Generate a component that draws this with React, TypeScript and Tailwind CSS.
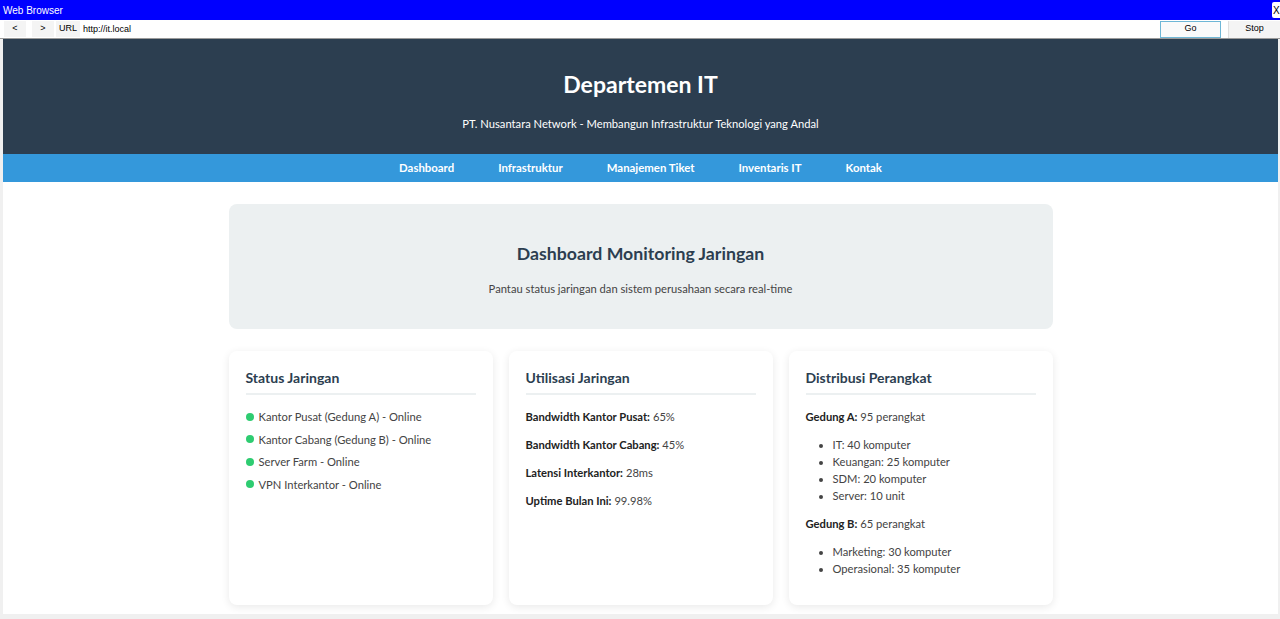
import { useState } from "react";

const navItems = ["Dashboard", "Infrastruktur", "Manajemen Tiket", "Inventaris IT", "Kontak"];

const statusItems = [
  "Kantor Pusat (Gedung A) - Online",
  "Kantor Cabang (Gedung B) - Online",
  "Server Farm - Online",
  "VPN Interkantor - Online",
];

const utilisasi = [
  { label: "Bandwidth Kantor Pusat:", value: "65%" },
  { label: "Bandwidth Kantor Cabang:", value: "45%" },
  { label: "Latensi Interkantor:", value: "28ms" },
  { label: "Uptime Bulan Ini:", value: "99.98%" },
];

const Card = ({ title, children }: { title: string; children: React.ReactNode }) => (
  <div className="bg-white rounded-lg shadow-[0_2px_8px_rgba(0,0,0,0.09)] px-[17px] pt-[17px] pb-4 h-[254px]">
    <h3 className="text-[14px] font-bold text-[#2c3e50] leading-[20px] pb-[5px] border-b-2 border-[#ecf0f1] mb-[13px]">
      {title}
    </h3>
    {children}
  </div>
);

export default function App() {
  const [url, setUrl] = useState("http://it.local");

  return (
    <div className="w-[1280px] h-[619px] overflow-hidden bg-[#f0f0f0] flex flex-col" style={{ fontFamily: 'Lato, "Open Sans", sans-serif' }}>
      {/* Browser chrome */}
      <div className="h-[20px] bg-[#0000ff] flex items-center justify-between text-white text-[10px] pl-[3px]" style={{ fontFamily: '"Liberation Sans", Arial, sans-serif' }}>
        <span>Web Browser</span>
        <span className="bg-white text-black h-[16px] w-[8px] flex items-center pl-[1px] rounded-l-[2px]">X</span>
      </div>
      <div className="h-[19px] bg-white flex items-center text-[9px] text-black border-b border-[#9a9a9a]" style={{ fontFamily: '"Liberation Sans", Arial, sans-serif' }}>
        <button className="ml-[4px] w-[22px] h-[16px] bg-[#f4f4f4]">&lt;</button>
        <button className="ml-[6px] w-[22px] h-[16px] bg-[#f4f4f4]">&gt;</button>
        <span className="ml-[2px] h-[16px] px-[3px] bg-[#f4f4f4] flex items-center">URL</span>
        <input
          value={url}
          onChange={(e) => setUrl(e.target.value)}
          className="ml-[3px] flex-1 h-[16px] outline-none text-[9px] bg-white"
        />
        <button className="w-[61px] h-[17px] border border-[#6fb7d6] bg-[#fafafa] mr-[7px]">Go</button>
        <button className="w-[52px] h-[17px] bg-[#f4f4f4] border-l border-[#e0e0e0]">Stop</button>
      </div>

      {/* Page */}
      <div className="flex-1 ml-[3px] mr-[2px] mb-[5px] bg-white overflow-hidden">
        <header className="bg-[#2c3e50] text-white text-center h-[115px] pt-[31px]">
          <h1 className="text-[23px] font-bold leading-[28px]">Departemen IT</h1>
          <p className="text-[11.2px] leading-[16px] mt-[18px]">PT. Nusantara Network - Membangun Infrastruktur Teknologi yang Andal</p>
        </header>

        <nav className="bg-[#3498db] h-[28px] flex items-center justify-center gap-[44px] text-white text-[11.4px] font-bold">
          {navItems.map((item) => (
            <a key={item} href="#" className="hover:underline">
              {item}
            </a>
          ))}
        </nav>

        <main className="w-[824px] mx-auto pt-[22px]">
          <section className="bg-[#ecf0f1] rounded-lg h-[125px] flex flex-col items-center pt-[38px]">
            <h2 className="text-[17.7px] font-bold text-[#2c3e50] leading-6">Dashboard Monitoring Jaringan</h2>
            <p className="text-[11.2px] leading-[16px] text-[#444] mt-[15px]">Pantau status jaringan dan sistem perusahaan secara real-time</p>
          </section>

          <div className="grid grid-cols-3 gap-4 mt-[22px] text-[11.2px] text-[#444]">
            <Card title="Status Jaringan">
              <ul className="flex flex-col gap-[5.5px]">
                {statusItems.map((s) => (
                  <li key={s} className="flex items-center gap-[5px] leading-[17px]">
                    <span className="w-[8px] h-[8px] rounded-full bg-[#2ecc71] inline-block" />
                    {s}
                  </li>
                ))}
              </ul>
            </Card>

            <Card title="Utilisasi Jaringan">
              <div className="flex flex-col gap-[11px]">
                {utilisasi.map((u) => (
                  <p key={u.label} className="leading-[17px]">
                    <strong className="font-bold text-[#222]">{u.label}</strong> {u.value}
                  </p>
                ))}
              </div>
            </Card>

            <Card title="Distribusi Perangkat">
              <p className="leading-[17px]">
                <strong className="font-bold text-[#222]">Gedung A:</strong> 95 perangkat
              </p>
              <ul className="list-disc pl-[27px] mt-[11px] leading-[17px]">
                <li>IT: 40 komputer</li>
                <li>Keuangan: 25 komputer</li>
                <li>SDM: 20 komputer</li>
                <li>Server: 10 unit</li>
              </ul>
              <p className="leading-[17px] mt-[11px]">
                <strong className="font-bold text-[#222]">Gedung B:</strong> 65 perangkat
              </p>
              <ul className="list-disc pl-[27px] mt-[11px] leading-[17px]">
                <li>Marketing: 30 komputer</li>
                <li>Operasional: 35 komputer</li>
              </ul>
            </Card>
          </div>
        </main>
      </div>
    </div>
  );
}
